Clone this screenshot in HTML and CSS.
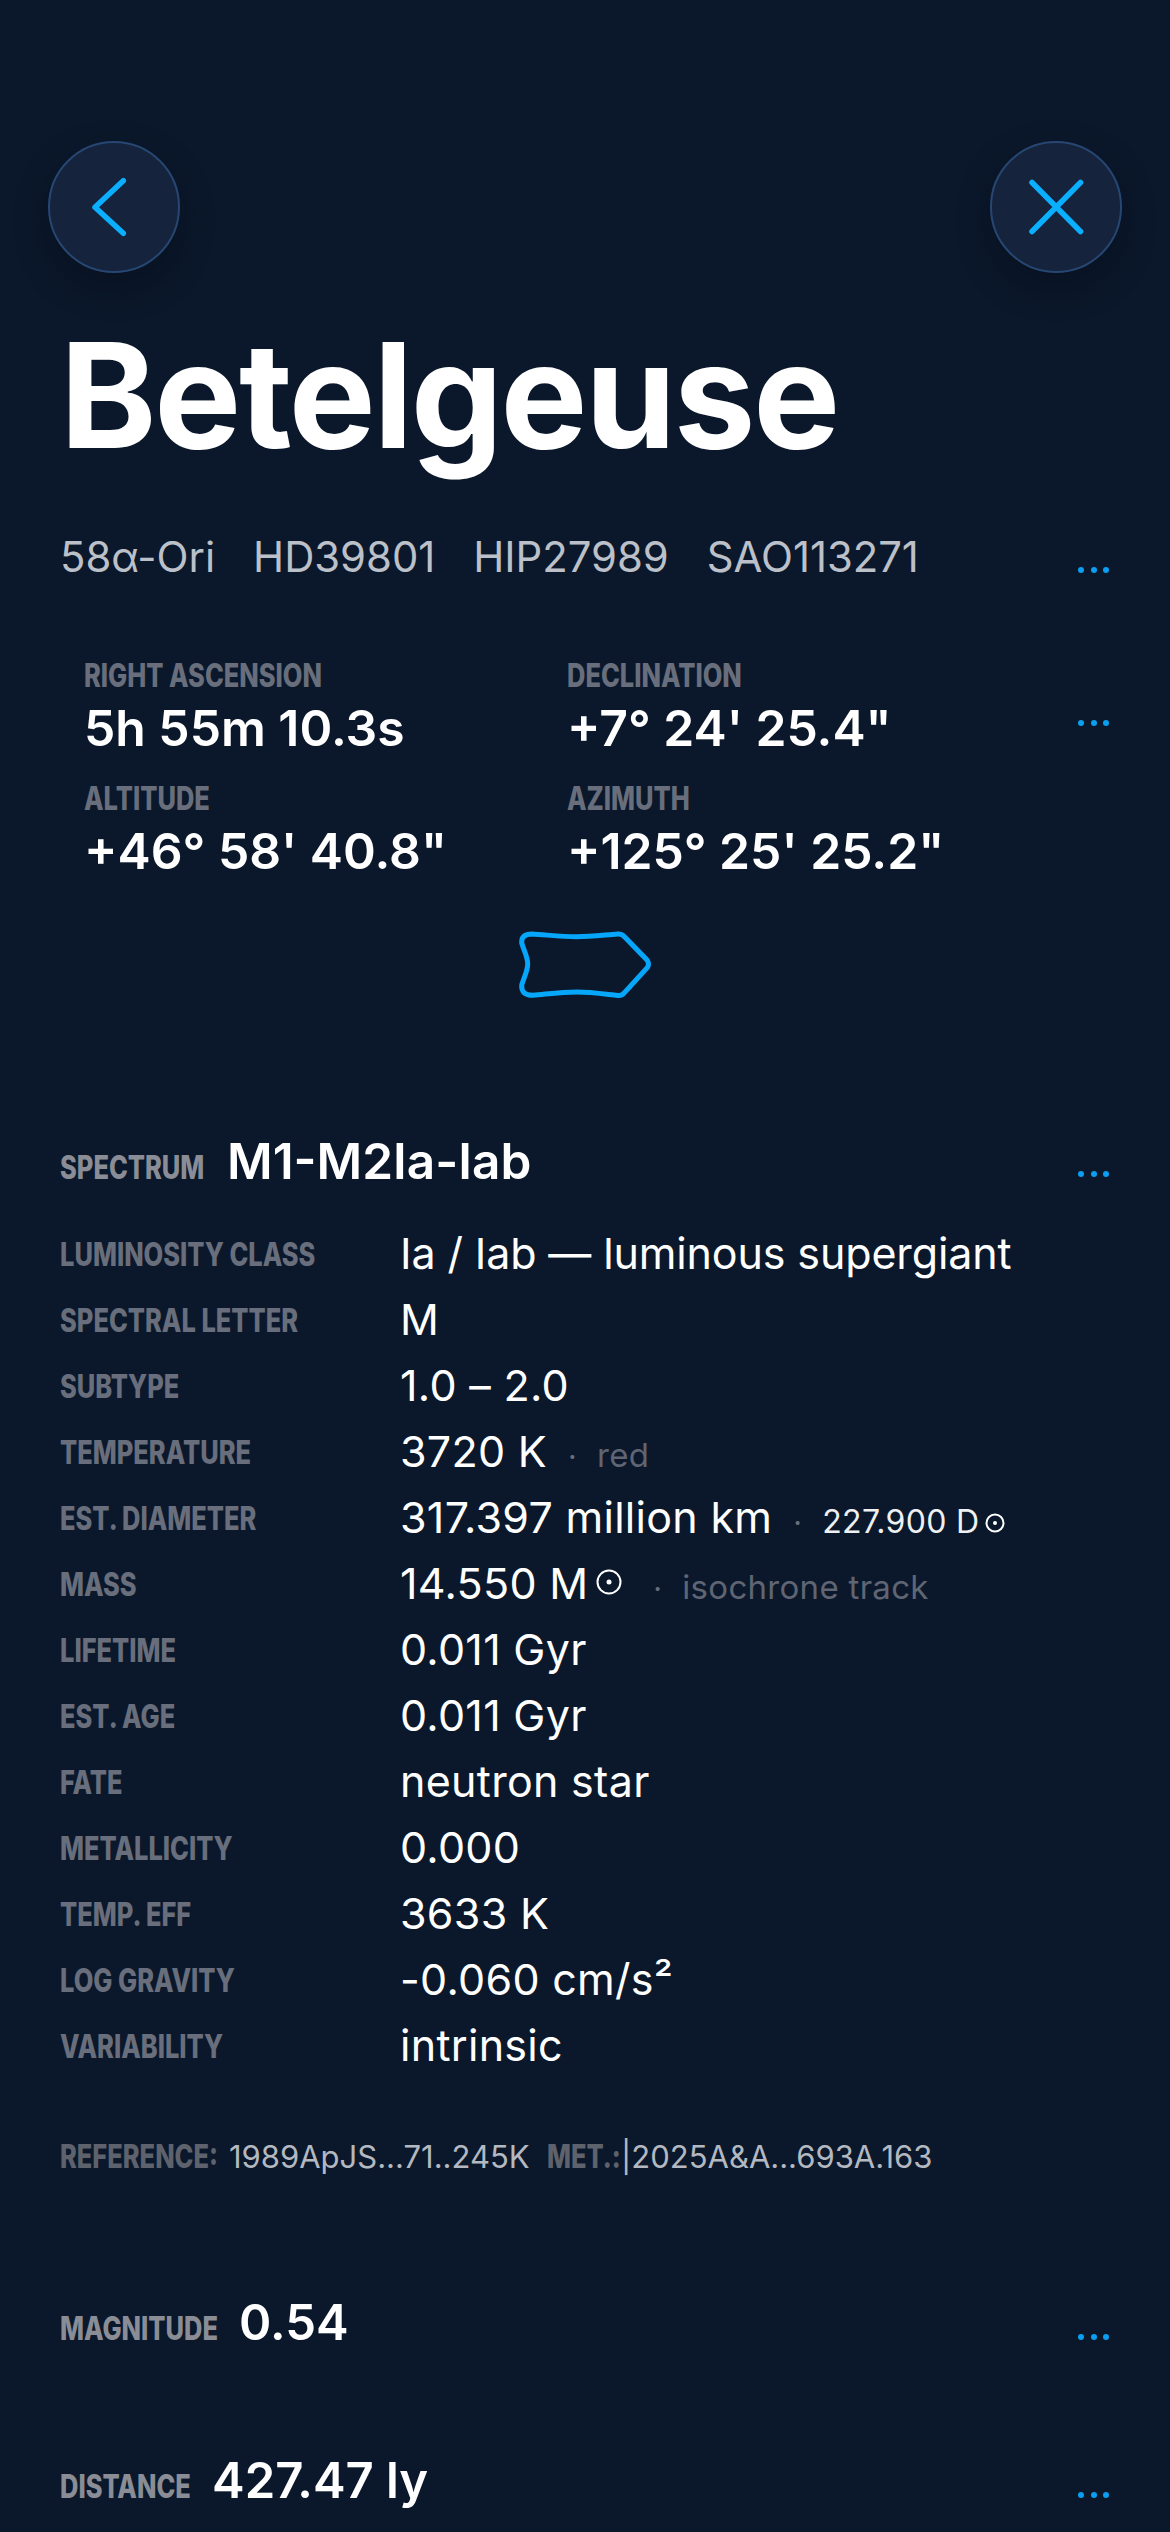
FILE: index.html
```html
<!DOCTYPE html>
<html lang="en">
<head>
  <meta charset="UTF-8" />
  <meta name="viewport" content="width=device-width, initial-scale=1" />
  <title>Betelgeuse</title>
  <link rel="stylesheet" href="styles.css">
</head>
<body>

<!-- Top buttons -->
<div class="top-bar">
  <button class="round-btn">
    <svg width="132" height="132" viewBox="0 0 132 132"><path d="M75.3 39.7 L47 66.3 L75.3 92.3" /></svg>
  </button>
  <button class="round-btn">
    <svg width="132" height="132" viewBox="0 0 132 132"><path d="M42 41.5 L90.5 90.5 M90.5 41.5 L42 90.5" /></svg>
  </button>
</div>

<h1 class="star-name">Betelgeuse</h1>

<div class="catalog-row">
  <div class="catalog-ids">
    <span>58α-Ori</span>
    <span>HD39801</span>
    <span>HIP27989</span>
    <span>SAO113271</span>
  </div>
  <div class="more"><i></i><i></i><i></i></div>
</div>

<!-- Coordinates -->
<div class="coords">
  <div class="coord">
    <div class="label">RIGHT ASCENSION</div>
    <div class="coord-value">5h 55m 10.3s</div>
  </div>
  <div class="coord">
    <div class="label">DECLINATION</div>
    <div class="coord-value">+7° 24' 25.4"</div>
  </div>
  <div class="more coords-more"><i></i><i></i><i></i></div>
  <div class="coord">
    <div class="label">ALTITUDE</div>
    <div class="coord-value">+46° 58' 40.8"</div>
  </div>
  <div class="coord">
    <div class="label">AZIMUTH</div>
    <div class="coord-value">+125° 25' 25.2"</div>
  </div>
</div>

<div class="constellation">
  <svg width="140" height="72" viewBox="0 0 140 72">
    <path d="M16 5 C32 6 46 7.7 60.7 7.7 C75 7.7 88 6 102 5 Q106 4.8 109 8.3 L131 31 Q134 35 131 39 L109 63 Q106 67 102 66.5 C88 65 75 63 60.7 63 C46 63 32 65 17 66.3 Q5 66.5 5.7 56 C8 48 11.7 42 11.7 35 C11.7 28 8 22 5.7 14 Q5 5 16 5 Z" />
  </svg>
</div>

<!-- Spectrum -->
<div class="section-head spectrum-head">
  <div class="head-text">
    <span class="label">SPECTRUM</span>
    <span class="head-value">M1-M2Ia-Iab</span>
  </div>
  <div class="more"><i></i><i></i><i></i></div>
</div>

<div class="details">
  <div class="detail-row"><div class="label">LUMINOSITY CLASS</div><div class="detail-value detail-long">Ia / Iab — luminous supergiant</div></div>
  <div class="detail-row"><div class="label">SPECTRAL LETTER</div><div class="detail-value">M</div></div>
  <div class="detail-row"><div class="label">SUBTYPE</div><div class="detail-value">1.0 – 2.0</div></div>
  <div class="detail-row"><div class="label">TEMPERATURE</div><div class="detail-value">3720 K<span class="sep">·</span><span class="note">red</span></div></div>
  <div class="detail-row"><div class="label">EST. DIAMETER</div><div class="detail-value">317.397 million km<span class="sep">·</span><span class="alt">227.900 D<svg class="sun sun-small" viewBox="0 0 20 20"><circle cx="10" cy="10" r="8.5" /><circle class="sun-dot" cx="10" cy="10" r="2" /></svg></span></div></div>
  <div class="detail-row"><div class="label">MASS</div><div class="detail-value">14.550 M<svg class="sun" viewBox="0 0 26 26"><circle cx="13" cy="13" r="11.5" /><circle class="sun-dot" cx="13" cy="13" r="2.5" /></svg><span class="sep">·</span><span class="note">isochrone track</span></div></div>
  <div class="detail-row"><div class="label">LIFETIME</div><div class="detail-value">0.011 Gyr</div></div>
  <div class="detail-row"><div class="label">EST. AGE</div><div class="detail-value">0.011 Gyr</div></div>
  <div class="detail-row"><div class="label">FATE</div><div class="detail-value">neutron star</div></div>
  <div class="detail-row"><div class="label">METALLICITY</div><div class="detail-value">0.000</div></div>
  <div class="detail-row"><div class="label">TEMP. EFF</div><div class="detail-value">3633 K</div></div>
  <div class="detail-row"><div class="label">LOG GRAVITY</div><div class="detail-value">-0.060 cm/s²</div></div>
  <div class="detail-row"><div class="label">VARIABILITY</div><div class="detail-value">intrinsic</div></div>
</div>

<div class="reference">
  <span class="label ref-label">REFERENCE:</span><span class="ref-code ref-first">1989ApJS...71..245K</span><span class="label met-label">MET.:</span><span class="ref-code">|2025A&amp;A...693A.163</span>
</div>

<!-- Magnitude / distance -->
<div class="section-head magnitude-head">
  <div class="head-text">
    <span class="label">MAGNITUDE</span>
    <span class="head-value">0.54</span>
  </div>
  <div class="more"><i></i><i></i><i></i></div>
</div>

<div class="section-head distance-head">
  <div class="head-text">
    <span class="label">DISTANCE</span>
    <span class="head-value">427.47 ly</span>
  </div>
  <div class="more"><i></i><i></i><i></i></div>
</div>

</body>
</html>
```

FILE: styles.css
```css
* {
  margin: 0; padding: 0; box-sizing: border-box;
}
body {
  font-family: 'Inter', 'Noto Sans', sans-serif;
  background: #0b182b;
  color: white;
  width: 1170px;
  height: 2532px;
  overflow: hidden;
}
.top-bar {
  display: flex;
  justify-content: space-between;
  padding: 141px 48px 0;
}
.round-btn {
  width: 132px;
  height: 132px;
  border-radius: 50%;
  border: 2px solid #274773;
  background: #15233c;
  box-shadow: 0 14px 30px rgba(5, 12, 24, 0.5);
}
.round-btn svg {
  display: block;
  margin: -2px;
}
.round-btn path {
  fill: none;
  stroke: #0ab0ff;
  stroke-width: 5.5;
  stroke-linecap: round;
  stroke-linejoin: round;
}
.star-name {
  font-size: 146px;
  font-weight: 700;
  line-height: 176px;
  letter-spacing: -2.3px;
  margin: 34px 0 0 60px;
}
.catalog-row {
  display: flex;
  justify-content: space-between;
  align-items: flex-end;
  padding: 0 61px 0 60px;
  margin-top: 50px;
}
.catalog-ids {
  display: flex;
  gap: 38px;
  font-size: 41.8px;
  line-height: 48px;
  color: #bcc0c8;
}
.more {
  display: flex;
  gap: 6.5px;
  padding-bottom: 8px;
}
.more i {
  width: 6px;
  height: 6px;
  border-radius: 50%;
  background: #0a9ff0;
}
.label {
  display: block;
  font-weight: 800;
  font-size: 32px;
  line-height: 38px;
  color: #686e7b;
  white-space: nowrap;
  transform: scaleX(0.795);
  transform-origin: left center;
}
.coords {
  display: grid;
  grid-template-columns: 483px 441px 1fr;
  padding: 0 61px 0 84px;
  margin-top: 76px;
  row-gap: 24px;
}
.coord-value {
  font-size: 49.8px;
  font-weight: 600;
  line-height: 56px;
  margin-top: 5px;
}
.coords-more {
  justify-content: flex-end;
  padding: 63px 0 0;
}
.constellation {
  display: flex;
  justify-content: center;
  padding-left: 2px;
  margin-top: 50px;
}
.constellation path {
  fill: none;
  stroke: #06a6fb;
  stroke-width: 5;
}
.section-head {
  display: flex;
  justify-content: space-between;
  align-items: flex-end;
  padding: 0 61px 0 60px;
}
.head-text {
  display: flex;
  align-items: baseline;
}
.head-value {
  font-size: 49px;
  font-weight: 600;
  line-height: 58px;
}
.section-head .label {
  color: #8a8d96;
}
.section-head .more {
  padding-bottom: 12px;
}
.spectrum-head .label {
  width: 167px;
}
.spectrum-head .head-value {
  font-size: 49.5px;
}
.magnitude-head .label {
  width: 179px;
}
.distance-head .label {
  width: 152px;
}
.spectrum-head {
  margin-top: 131px;
}
.spectrum-head .more {
  padding-bottom: 13px;
}
.details {
  padding: 0 60px;
  margin-top: 30px;
}
.detail-row {
  display: flex;
  align-items: baseline;
  height: 66px;
}
.detail-row .label {
  width: 340px;
  flex-shrink: 0;
  transform: scaleX(0.795) translateY(-3px);
}
.detail-value {
  font-size: 43px;
  letter-spacing: 0.3px;
  line-height: 66px;
  white-space: nowrap;
}
.detail-long {
  letter-spacing: -0.13px;
}
.sep {
  font-size: 30px;
  color: #686e7b;
  margin: 0 20px 0 21px;
}
.note {
  font-size: 33px;
  color: #5f6573;
}
.alt {
  font-size: 32px;
  color: #eef0f3;
}
.sun {
  width: 26px;
  height: 26px;
  margin: 0 10px 0 8px;
  vertical-align: 4px;
}
.sun-small {
  width: 20px;
  height: 20px;
  margin: 0 0 0 6px;
  vertical-align: 0;
}
.sun circle {
  fill: none;
  stroke: white;
  stroke-width: 2;
}
.sun .sun-dot {
  fill: white;
  stroke: none;
}
.reference {
  display: flex;
  align-items: baseline;
  padding-left: 60px;
  margin-top: 60px;
  line-height: 38px;
  white-space: nowrap;
}
.reference .label {
  color: #5e626c;
}
.ref-label {
  width: 169px;
}
.ref-first {
  width: 318px;
}
.met-label {
  width: 74px;
}
.ref-code {
  font-size: 31px;
  color: #b4b8c0;
}
.magnitude-head {
  margin-top: 118px;
}
.distance-head {
  margin-top: 100px;
}
```
